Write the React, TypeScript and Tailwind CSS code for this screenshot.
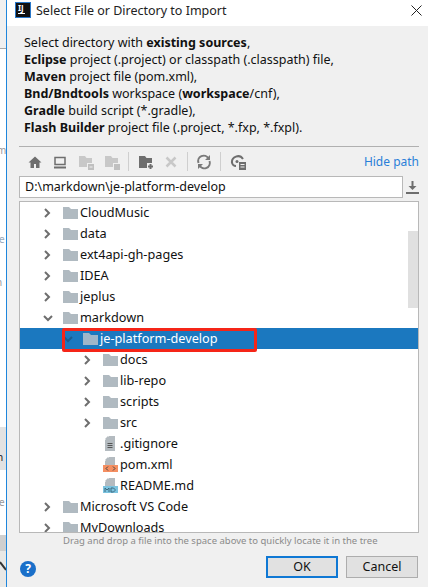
const FolderIcon = ({ selected }: { selected?: boolean }) => (
  <svg width="15" height="12" viewBox="0 0 15 12" className="shrink-0">
    <path d="M0 0h6l2 2h7v10H0z" fill={selected ? "#9fb6c9" : "#b0bac1"} />
  </svg>
);

const Chevron = ({ open, selected }: { open?: boolean; selected?: boolean }) => (
  <svg width="10" height="10" viewBox="0 0 10 10" className="shrink-0">
    <path
      d={open ? "M1 3l4 4 4-4" : "M2 1l4 4-4 4"}
      fill="none"
      stroke={selected ? "#1c5c8e" : "#6e6e6e"}
      strokeWidth="2"
    />
  </svg>
);

const FileBase = ({ children }: { children: React.ReactNode }) => (
  <svg width="15" height="15" viewBox="0 0 15 15" className="shrink-0">
    <path d="M6 0h6v15H2V4z" fill="#b4bbc0" />
    <path d="M5 0v3H2z" fill="#b4bbc0" />
    {children}
  </svg>
);

const Row = ({
  depth,
  label,
  open,
  arrow = true,
  icon,
  selected,
}: {
  depth: number;
  label: string;
  open?: boolean;
  arrow?: boolean;
  icon?: React.ReactNode;
  selected?: boolean;
}) => (
  <div className={`flex h-[21px] items-center ${selected ? "bg-[#1b78bf] text-white" : "text-[#111]"}`}>
    <div className={depth === 0 ? "w-[23px]" : depth === 1 ? "w-[43px]" : "w-[63px]"} />
    <div className="flex w-[20px]">{arrow && <Chevron open={open} selected={selected} />}</div>
    {icon ?? <FolderIcon selected={selected} />}
    <span className="ml-[2px] whitespace-nowrap">{label}</span>
  </div>
);

const ToolIcon = ({ children, className }: { children: React.ReactNode; className: string }) => (
  <svg width="16" height="16" viewBox="0 0 16 16" className={`shrink-0 ${className}`}>
    {children}
  </svg>
);

const Sep = () => <div className="ml-[8px] h-[19px] w-px bg-[#cfcfcf]" />;

export default function App() {
  return (
    <div className="relative flex h-[587px] w-[428px] overflow-hidden bg-white font-['Noto_Sans','Open_Sans',sans-serif] text-[12.5px] text-[#111]">
      {/* bit of the window behind the dialog */}
      <div className="relative flex w-[6px] shrink-0 flex-col overflow-hidden text-[10px] leading-[12px]">
        <div className="h-[49px] border-b border-[#a8a8a8] bg-[#f0f0f0]" />
        <div className="h-[378px] bg-white" />
        <div className="h-[43px] bg-[#e2e2e2]" />
        <div className="h-[65px] bg-white" />
        <div className="flex-1 bg-[#cfcfcf]">
          <svg width="6" height="52" viewBox="0 0 6 52">
            <path d="M0 16h6v36H0z" fill="#e8e8e6" />
            <path d="M0 27l6 8" stroke="#333" strokeWidth="2" />
          </svg>
        </div>
        <span className="absolute left-[-3px] top-[144px] text-[#999]">m</span>
        <span className="absolute left-[-1px] top-[233px] text-[#9ab]">e</span>
        <span className="absolute left-[-4px] top-[276px] text-[#999]">n</span>
        <span className="absolute left-[-3px] top-[451px] text-[#222]">n</span>
        <span className="absolute left-[-1px] top-[496px] text-[#999]">e</span>
      </div>

      <div className="flex min-w-0 flex-1 flex-col border-l border-[#1f86dc] bg-[#f0f0f0]">
        <div className="flex h-[26px] shrink-0 items-start bg-white pl-[8px] pr-[6px] pt-[2px]">
          <div className="flex h-[16px] w-[16px] shrink-0 flex-col border border-[#2a78c9] bg-[#111] pl-[2px] text-[8px] font-bold leading-[9px] text-white">
            IJ
            <div className="mt-[1px] h-px w-[7px] bg-white" />
          </div>
          <span className="ml-[5px] flex-1 leading-[18px] text-[#222]">Select File or Directory to Import</span>
          <svg width="11" height="11" viewBox="0 0 11 11" className="mt-[3px]">
            <path d="M.5.500l10 10M10.500.500l-10 10" stroke="#222" fill="none" />
          </svg>
        </div>

        <div className="flex min-h-0 flex-1 flex-col pl-[12px] pr-[9px]">
          <div className="pl-[5px] pt-[8px] leading-[17px]">
            <div>Select directory with <b>existing sources</b>,</div>
            <div><b>Eclipse</b> project (.project) or classpath (.classpath) file,</div>
            <div><b>Maven</b> project file (pom.xml),</div>
            <div><b>Bnd/Bndtools</b> workspace (<b>workspace</b>/cnf),</div>
            <div><b>Gradle</b> build script (*.gradle),</div>
            <div><b>Flash Builder</b> project file (.project, *.fxp, *.fxpl).</div>
          </div>

          <div className="mt-[10px] h-px bg-[#b0b0b0]" />

          <div className="flex h-[29px] items-center">
            <ToolIcon className="ml-[8px]">
              <path d="M8 2.500L1.500 8.500h2V14H7v-4h2v4h3.500V8.500h2z" fill="#6e6e6e" />
            </ToolIcon>
            <ToolIcon className="ml-[9px]">
              <path d="M3 3.500h10v7H3z" fill="none" stroke="#6e6e6e" strokeWidth="1.500" />
              <path d="M2 13.500h12" stroke="#6e6e6e" strokeWidth="2" />
            </ToolIcon>
            <ToolIcon className="ml-[10px]">
              <path d="M1 2h6l1.500 2H14v9H1z" fill="#c8c8c8" />
              <path d="M9 9h7v7H9z" fill="#f0f0f0" />
              <path d="M10 10h6v6h-6z" fill="#c0c0c0" />
              <path d="M11.500 13h3" stroke="#f0f0f0" />
            </ToolIcon>
            <ToolIcon className="ml-[10px]">
              <path d="M1 2h6l1.500 2H14v9H1z" fill="#c8c8c8" />
              <path d="M9 9h7v7H9z" fill="#f0f0f0" />
              <path d="M10 10h6v6h-6z" fill="#c0c0c0" />
            </ToolIcon>
            <Sep />
            <ToolIcon className="ml-[9px]">
              <path d="M1 2h6l1.500 2H14v10H1z" fill="#6e6e6e" />
              <path d="M9 9h7v7H9z" fill="#f0f0f0" />
              <path d="M12.500 10v5M10 12.500h5" stroke="#6e6e6e" strokeWidth="2" />
            </ToolIcon>
            <ToolIcon className="ml-[9px]">
              <path d="M3.500 3.500l9 9M12.500 3.500l-9 9" stroke="#c8c8c8" strokeWidth="2.500" />
            </ToolIcon>
            <Sep />
            <ToolIcon className="ml-[8px]">
              <path d="M2.500 9A5.500 5.500 0 0 1 12.500 4.500M13.500 7a5.500 5.500 0 0 1-10 4.500" fill="none" stroke="#7a7a7a" strokeWidth="2" />
              <path d="M14 1v5h-5zM2 15v-5h5z" fill="#7a7a7a" />
            </ToolIcon>
            <Sep />
            <ToolIcon className="ml-[9px]">
              <path d="M2 9a6 6 0 0 1 11-4" fill="none" stroke="#6e6e6e" strokeWidth="2" />
              <path d="M2 8c0 2.500 2 4 4 4" fill="none" stroke="#6e6e6e" strokeWidth="2" />
              <circle cx="7" cy="7.500" r="1.500" fill="#6e6e6e" />
              <path d="M9 8h7v8H9z" fill="#6e6e6e" />
              <path d="M10.500 10.500h4M10.500 13h4" stroke="#f0f0f0" />
            </ToolIcon>
            <span className="ml-auto text-[12px] text-[#2a7fd8]">Hide path</span>
          </div>

          <div className="flex h-[22px] items-center">
            <div className="flex h-full min-w-0 flex-1 items-center border border-[#b8b8b8] bg-white pl-[5px]">
              D:\markdown\je-platform-develop
            </div>
            <div className="ml-[3px] flex w-[13px] justify-center">
              <svg width="13" height="13" viewBox="0 0 13 13">
                <path d="M6.500 0v7" stroke="#6e6e6e" strokeWidth="2" />
                <path d="M2.500 5h8l-4 4z" fill="#6e6e6e" />
                <path d="M0 12h13" stroke="#6e6e6e" strokeWidth="2" />
              </svg>
            </div>
          </div>

          <div className="relative mt-[3px] h-[332px] shrink-0 overflow-hidden border border-[#b8b8b8] bg-white text-[12.7px]">
            <Row depth={0} label="CloudMusic" />
            <Row depth={0} label="data" />
            <Row depth={0} label="ext4api-gh-pages" />
            <Row depth={0} label="IDEA" />
            <Row depth={0} label="jeplus" />
            <Row depth={0} label="markdown" open />
            <Row depth={1} label="je-platform-develop" open selected />
            <Row depth={2} label="docs" />
            <Row depth={2} label="lib-repo" />
            <Row depth={2} label="scripts" />
            <Row depth={2} label="src" />
            <Row
              depth={2}
              arrow={false}
              label=".gitignore"
              icon={
                <FileBase>
                  <path d="M4.500 7.500h5M4.500 9.500h5M4.500 11.500h5" stroke="#555" />
                </FileBase>
              }
            />
            <Row
              depth={2}
              arrow={false}
              label="pom.xml"
              icon={
                <FileBase>
                  <path d="M0 8h15v7H0z" fill="#f58f62" />
                  <path d="M5 9.500l-2 2 2 2M10 9.500l2 2-2 2" fill="none" stroke="#444" />
                </FileBase>
              }
            />
            <Row
              depth={2}
              arrow={false}
              label="README.md"
              icon={
                <FileBase>
                  <path d="M0 8h15v7H0z" fill="#7cc3df" />
                  <path d="M2 14v-4l2 2 2-2v4M8 10v4h2.500l1.500-1.500v-1L10.500 10z" fill="none" stroke="#3c6a80" />
                </FileBase>
              }
            />
            <Row depth={0} label="Microsoft VS Code" />
            <Row depth={0} label="MyDownloads" />
            <div className="absolute right-0 top-[29px] h-[77px] w-[10px] bg-[#e0e0e0]" />
          </div>

          <div className="whitespace-nowrap pl-[44px] text-[9.5px] leading-[16px] text-[#8a8a8a]">
            Drag and drop a file into the space above to quickly locate it in the tree
          </div>

          <div className="mt-[7px] flex items-start pr-[1px]">
            <div className="ml-[1px] mt-[5px] flex h-[16px] w-[16px] items-center justify-center rounded-full bg-[#1a6fc9] text-[12px] font-bold text-white">
              ?
            </div>
            <button className="ml-auto h-[22px] w-[72px] border-2 border-[#0f78d4] bg-[#e1e1e1]">OK</button>
            <button className="ml-[8px] h-[22px] w-[72px] border border-[#adadad] bg-[#e1e1e1]">Cancel</button>
          </div>
        </div>
      </div>

      {/* red annotation box */}
      <div className="absolute left-[62px] top-[328px] h-[24px] w-[195px] rounded-[2px] border-[3px] border-[#f52518]" />
    </div>
  );
}
